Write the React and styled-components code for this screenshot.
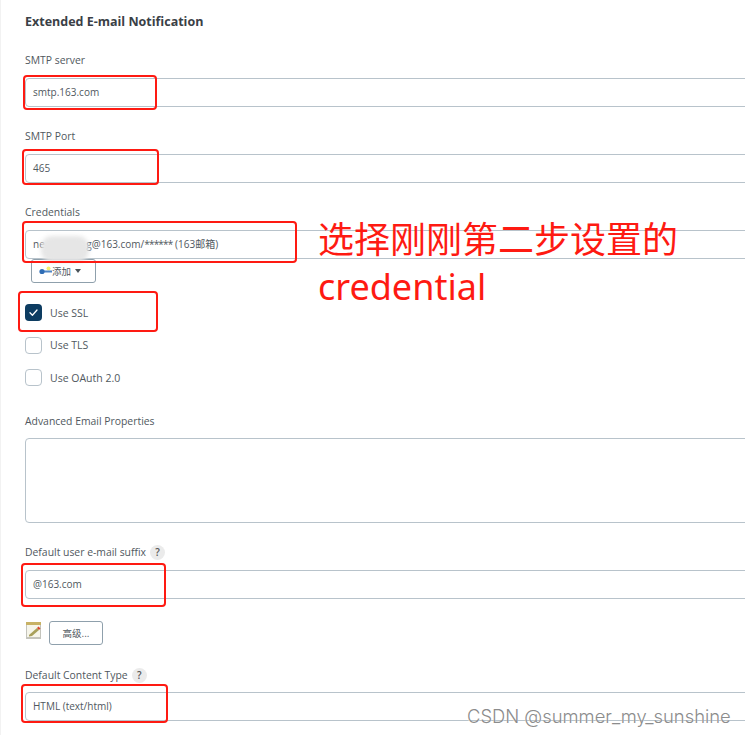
import React from 'react';
import styled, { createGlobalStyle } from 'styled-components';

const Global = createGlobalStyle`
  html, body {
    margin: 0;
    padding: 0;
    background: #fff;
    overflow: hidden;
  }
  body {
    font-family: 'Open Sans', 'Noto Sans', 'Noto Sans CJK SC', sans-serif;
    color: #333;
  }
`;

const Page = styled.div`
  position: relative;
  width: 745px;
  height: 735px;
  overflow: hidden;
  box-sizing: border-box;
  padding: 14px 0 0 24px;
  border-left: 1px solid #f2f2f2;
`;

const Title = styled.h3`
  margin: 0 0 22px;
  font-size: 12.5px;
  line-height: 16px;
  font-weight: 700;
  color: #3a4046;
`;

const Field = styled.div`
  margin-bottom: ${props => props.$gap ?? 21}px;
`;

const Label = styled.div`
  display: flex;
  align-items: center;
  gap: 4px;
  height: 16px;
  margin-bottom: ${props => props.$gap ?? 10}px;
  font-size: 10.4px;
  line-height: 16px;
  color: #50585e;
`;

const Help = styled.span`
  display: inline-flex;
  align-items: center;
  justify-content: center;
  width: 15px;
  height: 15px;
  border-radius: 50%;
  background: #ebebeb;
  font-size: 10px;
  font-weight: 600;
  color: #555;
`;

const Input = styled.div`
  box-sizing: border-box;
  width: 740px;
  height: ${props => props.$height || 29}px;
  padding: 0 0 2px 7px;
  display: flex;
  align-items: center;
  border: 1px solid #b8c3cb;
  border-radius: 4px;
  font-size: 10px;
  color: #50585e;
  background: #fff;
  white-space: pre;
`;

const Stars = styled.span`
  letter-spacing: -0.8px;
`;

const Button = styled.div`
  box-sizing: border-box;
  display: inline-flex;
  align-items: center;
  justify-content: center;
  gap: 3px;
  width: ${props => props.$width}px;
  height: 24px;
  padding-right: ${props => props.$shift || 0}px;
  border: 1px solid #8fa0ac;
  border-radius: 3px;
  background: #fff;
  font-family: 'Noto Sans CJK SC', sans-serif;
  font-size: 9.5px;
  color: #50585e;
`;

const AddRow = styled.div`
  display: flex;
  padding-left: 6px;
  margin-bottom: 21px;
`;

const Caret = styled.span`
  width: 0;
  height: 0;
  margin-left: 1px;
  border-left: 3.5px solid transparent;
  border-right: 3.5px solid transparent;
  border-top: 4px solid #4a5359;
`;

const Options = styled.div`
  display: flex;
  flex-direction: column;
  gap: 15.5px;
  margin-bottom: 27px;
`;

const Option = styled.label`
  display: flex;
  align-items: center;
  gap: 8px;
  height: 17px;
  font-size: 10.5px;
  color: #50585e;
`;

const Box = styled.span`
  box-sizing: border-box;
  display: flex;
  align-items: center;
  justify-content: center;
  width: 17px;
  height: 17px;
  border-radius: 4px;
  border: ${props => (props.$checked ? 'none' : '1.5px solid #b8c3cb')};
  background: ${props => (props.$checked ? '#0d3c61' : '#fff')};
`;

const ToolRow = styled.div`
  display: flex;
  align-items: flex-start;
  gap: 6px;
  margin: 22px 0 22px;
`;

const Red = styled.div`
  position: absolute;
  box-sizing: border-box;
  left: ${props => props.$x}px;
  top: ${props => props.$y}px;
  width: ${props => props.$w}px;
  height: ${props => props.$h}px;
  border: 2px solid #fe1a12;
  border-radius: 4px;
`;

const Smudge = styled.div`
  position: absolute;
  left: 40px;
  top: 236px;
  width: 48px;
  height: 26px;
  border-radius: 11px;
  background: #e6e6e6;
  filter: blur(2px);
`;

const Note = styled.div`
  position: absolute;
  left: 317px;
  top: 216px;
  font-family: 'Noto Sans', 'Noto Sans CJK SC', sans-serif;
  font-size: 36px;
  line-height: 47px;
  color: #fe1a12;
  white-space: nowrap;
`;

const Mark = styled.div`
  position: absolute;
  left: 466px;
  top: 704px;
  font-family: 'Inter', 'Liberation Sans', sans-serif;
  font-size: 18.4px;
  font-weight: 300;
  line-height: 24px;
  color: #8c8c8c;
  text-shadow: 0 1px 1px #fff;
  white-space: nowrap;
`;

const Check = () => (
  <svg width="11" height="11" viewBox="0 0 11 11" fill="none">
    <path d="M2 5.8 4.4 8.2 9 3" stroke="#fff" strokeWidth="1.3" strokeLinecap="round" strokeLinejoin="round" />
  </svg>
);

const KeyIcon = () => (
  <svg width="13" height="11" viewBox="0 0 13 11" style={{ marginRight: -3 }}>
    <circle cx="9.5" cy="2.5" r="2" fill="#f4ee6e" />
    <rect x="3" y="4.5" width="10" height="2" fill="#4f86c6" />
    <circle cx="3" cy="5.5" r="2.6" fill="#2f6db5" />
  </svg>
);

const NotepadIcon = () => (
  <svg width="18" height="19" viewBox="0 0 18 19">
    <rect x="1" y="2" width="15" height="16" fill="#c4c4bc" />
    <rect x="2" y="3.5" width="13" height="12.5" fill="#f6f5ea" />
    <rect x="1" y="1" width="15" height="3" fill="#c8b265" />
    <path d="M4 14 12 7l2 2-7 6-3 .5z" fill="#a8a05a" />
    <path d="M12 7l2 2 1.5-1.5-2-2z" fill="#d9452f" />
  </svg>
);

const App = () => (
  <Page>
    <Global />
    <Title>Extended E-mail Notification</Title>
    <Field>
      <Label>SMTP server</Label>
      <Input>smtp.163.com</Input>
    </Field>
    <Field>
      <Label>SMTP Port</Label>
      <Input>465</Input>
    </Field>
    <Field $gap={0}>
      <Label>Credentials</Label>
      <Input>ne                g@163.com/<Stars>******</Stars> (163邮箱)</Input>
    </Field>
    <AddRow>
      <Button $width={65} $shift={7}><KeyIcon />添加<Caret /></Button>
    </AddRow>
    <Options>
      <Option><Box $checked><Check /></Box>Use SSL</Option>
      <Option><Box />Use TLS</Option>
      <Option><Box />Use OAuth 2.0</Option>
    </Options>
    <Field>
      <Label $gap={9}>Advanced Email Properties</Label>
      <Input $height={85} />
    </Field>
    <Field $gap={0}>
      <Label>Default user e-mail suffix <Help>?</Help></Label>
      <Input>@163.com</Input>
    </Field>
    <ToolRow>
      <NotepadIcon />
      <Button $width={54}>高级...</Button>
    </ToolRow>
    <Field $gap={0}>
      <Label $gap={9}>Default Content Type <Help>?</Help></Label>
      <Input>HTML (text/html)</Input>
    </Field>

    <Smudge />
    <Red $x={22} $y={75} $w={134} $h={35} />
    <Red $x={21} $y={149} $w={137} $h={36} />
    <Red $x={21} $y={221} $w={275} $h={42} />
    <Red $x={17} $y={291} $w={140} $h={41} />
    <Red $x={20} $y={563} $w={145} $h={44} />
    <Red $x={20} $y={684} $w={147} $h={39} />
    <Note>选择刚刚第二步设置的<br />credential</Note>
    <Mark>CSDN @summer_my_sunshine</Mark>
  </Page>
);

export default App;
